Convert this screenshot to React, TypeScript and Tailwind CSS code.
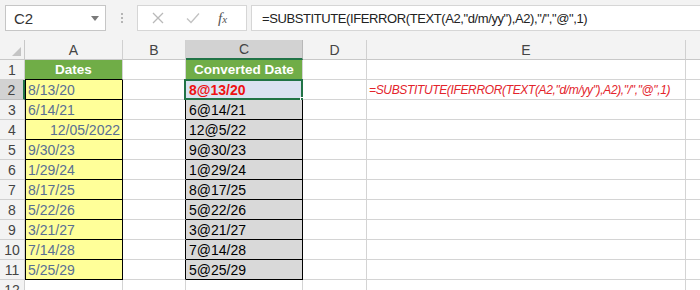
import React from "react";

const COLS = ["A", "B", "C", "D", "E"];
const WIDTHS = ["w-[98px]", "w-[63px]", "w-[117px]", "w-[64px]", "w-[319px]"];

const dates = ["8/13/20", "6/14/21", "12/05/2022", "9/30/23", "1/29/24", "8/17/25", "5/22/26", "3/21/27", "7/14/28", "5/25/29"];
const converted = ["8@13/20", "6@14/21", "12@5/22", "9@30/23", "1@29/24", "8@17/25", "5@22/26", "3@21/27", "7@14/28", "5@25/29"];

const FORMULA = '=SUBSTITUTE(IFERROR(TEXT(A2,"d/m/yy"),A2),"/","@",1)';

// which cells carry a thin black border (A2:A11, C2:C11)
const boxed = (col: number, row: number) => (col === 0 || col === 2) && row >= 2 && row <= 11;

const Cell = ({ col, row }: { col: number; row: number }) => {
  const me = boxed(col, row);
  const rightBlack = me || boxed(col + 1, row);
  const bottomBlack = me || boxed(col, row + 1);
  let bg = "bg-white";
  let content: React.ReactNode = null;

  if (row === 1 && (col === 0 || col === 2)) {
    bg = "bg-[#70ad47]";
    content = (
      <span className="w-full text-center text-[13.5px] font-bold text-white">{col === 0 ? "Dates" : "Converted Date"}</span>
    );
  } else if (col === 0 && row >= 2 && row <= 11) {
    bg = "bg-[#ffff99]";
    const v = dates[row - 2];
    content = (
      <span className={`w-full text-[#5a6f93] ${row === 4 ? "text-right pr-[2px]" : "pl-[3px]"}`}>{v}</span>
    );
  } else if (col === 2 && row >= 2 && row <= 11) {
    bg = row === 2 ? "bg-[#dae2f1]" : "bg-[#d9d9d9]";
    content = (
      <span className={`pl-[3px] ${row === 2 ? "font-bold text-[#ee1111]" : "text-black"}`}>{converted[row - 2]}</span>
    );
  } else if (col === 4 && row === 2) {
    content = (
      <span className="pl-[2px] text-[12px] tracking-[-0.35px] italic text-[#e3242b] whitespace-nowrap">{FORMULA}</span>
    );
  }

  return (
    <div
      className={`relative flex h-[20px] shrink-0 items-center overflow-visible border-r border-b ${WIDTHS[col]} ${bg} ${
        rightBlack ? "border-r-black" : "border-r-[#d4d4d4]"
      } ${bottomBlack ? "border-b-black" : "border-b-[#d4d4d4]"} ${me && col === 0 ? "shadow-[inset_1px_0_0_#000]" : ""}`}
    >
      {content}
      {col === 2 && row === 2 && (
        <>
          <div className="pointer-events-none absolute -left-[2px] -top-[1px] -right-[1px] -bottom-[1px] border-2 border-[#217346]" />
          <div className="absolute -right-[4px] -bottom-[4px] h-[6px] w-[6px] bg-[#217346] border border-white" />
        </>
      )}
    </div>
  );
};

export default function App() {
  const rows = Array.from({ length: 12 }, (_, i) => i + 1);
  return (
    <div
      className="h-[290px] w-[700px] overflow-hidden bg-white text-[14px] leading-none"
      style={{ fontFamily: '"Liberation Sans", Arial, sans-serif' }}
    >
      {/* FORMULA BAR */}
      <div className="flex h-[40px] items-start bg-[#f3f3f3] pt-[5px] pl-[5px]">
        <div className="flex h-[26px] w-[101px] items-center justify-between border border-[#c6c6c6] bg-white pl-[8px] pr-[6px] text-[15px] text-[#333]">
          <span>C2</span>
          <svg width="8" height="5" viewBox="0 0 8 5">
            <path d="M0 0h8L4 5z" fill="#7a7a7a" />
          </svg>
        </div>
        <div className="flex h-[26px] w-[31px] flex-col items-center justify-center gap-[2px]">
          <span className="h-[2px] w-[2px] bg-[#b5b5b5]" />
          <span className="h-[2px] w-[2px] bg-[#b5b5b5]" />
          <span className="h-[2px] w-[2px] bg-[#b5b5b5]" />
        </div>
        <div className="flex h-[26px] w-[110px] items-center border border-[#d6d6d6] bg-white">
          <svg className="ml-[14px]" width="12" height="12" viewBox="0 0 12 12">
            <path d="M1 1l10 10M11 1L1 11" stroke="#b9b9b9" strokeWidth="1.3" />
          </svg>
          <svg className="ml-[22px]" width="14" height="12" viewBox="0 0 14 12">
            <path d="M1 6.5l4 4L13 1.5" stroke="#c2c2c2" strokeWidth="1.3" fill="none" />
          </svg>
          <span
            className="ml-[18px] text-[15px] italic text-[#555]"
            style={{ fontFamily: '"Liberation Serif", serif' }}
          >
            f<span className="text-[11px]">x</span>
          </span>
        </div>
        <div className="ml-[4px] flex h-[26px] flex-1 items-center border border-r-0 border-[#d6d6d6] bg-white pl-[10px] text-[13px] tracking-[-0.4px] text-[#222] whitespace-nowrap">
          {FORMULA}
        </div>
      </div>

      {/* COLUMN HEADERS */}
      <div className="flex h-[20px] bg-[#f3f3f3] text-[#444]">
        <div className="relative h-[20px] w-[25px] shrink-0 border-r border-b border-[#c8c8c8]">
          <svg className="absolute right-[3px] bottom-[3px]" width="9" height="9" viewBox="0 0 9 9">
            <path d="M9 0v9H0z" fill="#c4c4c4" />
          </svg>
        </div>
        {COLS.map((c, i) => (
          <div
            key={c}
            className={`flex h-[20px] shrink-0 items-center justify-center border-r ${WIDTHS[i]} ${
              c === "C"
                ? "bg-[#d2d2d2] border-b-2 border-b-[#217346] border-r-[#b8b8b8]"
                : "border-b border-b-[#c8c8c8] border-r-[#d0d0d0]"
            }`}
          >
            {c}
          </div>
        ))}
        <div className="h-[20px] flex-1 border-b border-[#c8c8c8]" />
      </div>

      {/* ROWS */}
      {rows.map((r) => (
        <div key={r} className="flex">
          <div
            className={`flex h-[20px] w-[25px] shrink-0 items-center justify-center text-[#444] ${
              r === 2
                ? "bg-[#d2d2d2] border-r-2 border-r-[#217346] border-b border-b-[#bdbdbd]"
                : "bg-[#f3f3f3] border-r border-b border-[#d0d0d0]"
            }`}
          >
            {r}
          </div>
          {COLS.map((_, ci) => (
            <Cell key={ci} col={ci} row={r} />
          ))}
          <div className="h-[20px] flex-1 border-b border-[#d4d4d4]" />
        </div>
      ))}
    </div>
  );
}
